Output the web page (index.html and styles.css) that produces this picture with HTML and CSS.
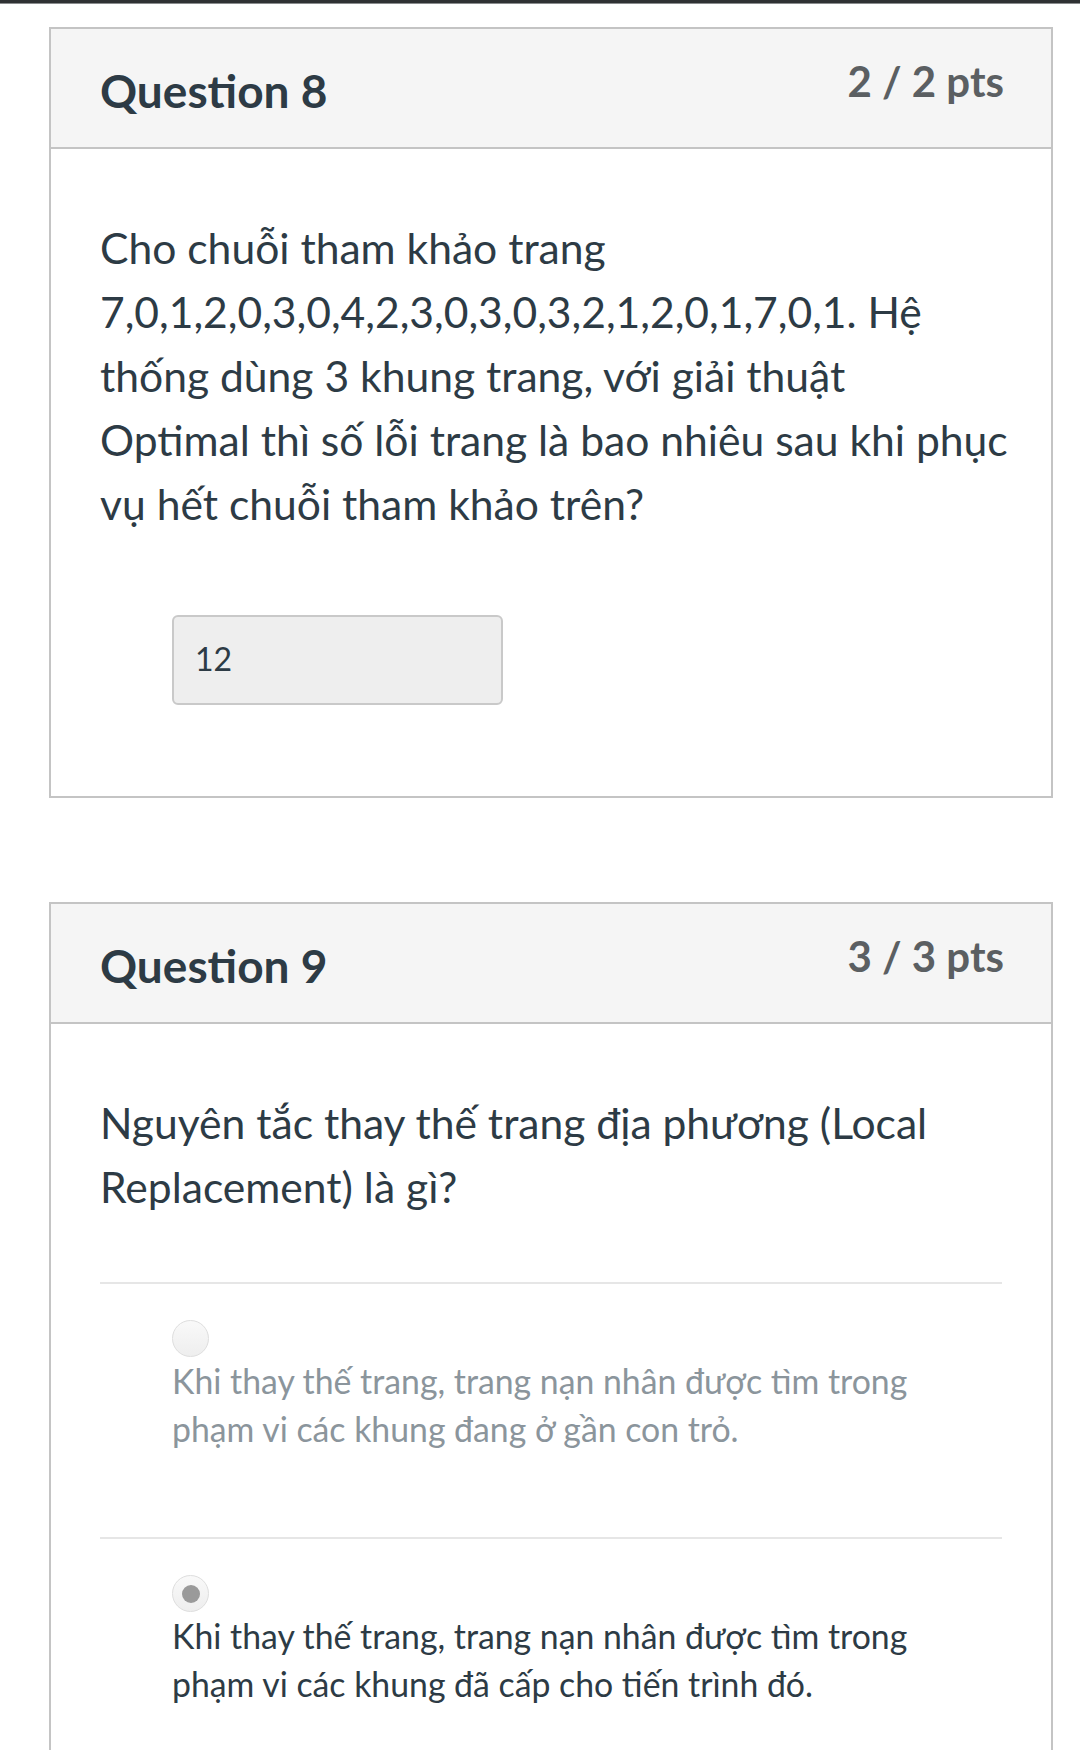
FILE: index.html
```html
<!DOCTYPE html>
<html lang="vi">
<head>
<meta charset="utf-8">
<link rel="stylesheet" href="styles.css">
</head>
<body>
<div class="topbar"></div>
<main class="page">
  <section class="card">
    <header class="card-header">
      <h2 class="q-title">Question 8</h2>
      <div class="q-points">2 / 2 pts</div>
    </header>
    <div class="card-body">
      <p class="q-text">Cho chuỗi tham khảo trang 7,0,1,2,0,3,0,4,2,3,0,3,0,3,2,1,2,0,1,7,0,1. Hệ thống dùng 3 khung trang, với giải thuật<br>Optimal thì số lỗi trang là bao nhiêu sau khi phục vụ hết chuỗi tham khảo trên?</p>
      <div class="answer-box">12</div>
    </div>
  </section>

  <section class="card card-open">
    <header class="card-header">
      <h2 class="q-title">Question 9</h2>
      <div class="q-points">3 / 3 pts</div>
    </header>
    <div class="card-body">
      <p class="q-text">Nguyên tắc thay thế trang địa phương (Local Replacement) là gì?</p>
      <div class="options">
        <div class="option">
          <span class="radio"></span>
          <div class="opt-text opt-muted">Khi thay thế trang, trang nạn nhân được tìm trong phạm vi các khung đang ở gần con trỏ.</div>
        </div>
        <div class="option">
          <span class="radio radio-checked"></span>
          <div class="opt-text">Khi thay thế trang, trang nạn nhân được tìm trong phạm vi các khung đã cấp cho tiến trình đó.</div>
        </div>
      </div>
    </div>
  </section>
</main>
</body>
</html>
```

FILE: styles.css
```css
* { box-sizing: border-box; }

html, body {
  margin: 0;
  padding: 0;
  background: #ffffff;
}

body {
  font-family: Lato, "Noto Sans", sans-serif;
  color: #2d3b45;
  height: 1750px;
  overflow: hidden;
}

.topbar {
  height: 4px;
  background: #2f3133;
  border-bottom: 1px solid #8a8c8e;
}

.page {
  padding: 23px 27px 0 49px;
}

.card {
  border: 2px solid #c4c4c4;
  background: #ffffff;
  margin-bottom: 104px;
}

.card-open {
  border-bottom: none;
}

.card-header {
  height: 120px;
  background: #f5f5f5;
  border-bottom: 2px solid #c4c4c4;
  padding: 0 47px 0 49px;
  display: flex;
  justify-content: space-between;
  align-items: flex-start;
}

.q-title {
  margin: 34px 0 0 0;
  font-size: 46px;
  line-height: 1.2;
  font-weight: 700;
  color: #2d3b45;
}

.q-points {
  margin-top: 27px;
  font-size: 42px;
  line-height: 1.2;
  font-weight: 700;
  color: #5b5f62;
}

.card-body {
  padding: 67px 30px 91px 49px;
}

.q-text {
  margin: 0;
  font-size: 42.6px;
  line-height: 64px;
}

.answer-box {
  margin: 79px 0 0 72px;
  width: 331px;
  height: 90px;
  background: #eeeeee;
  border: 2px solid #c9c9c9;
  border-radius: 6px;
  padding: 0 21px 4px 21px;
  display: flex;
  align-items: center;
  font-size: 32px;
  color: #2d3b45;
}

.options {
  margin-top: 63px;
  margin-right: 19px;
}

.option {
  border-top: 2px solid #e6e6e6;
  padding: 36px 40px 84px 72px;
}

.radio {
  display: flex;
  align-items: center;
  justify-content: center;
  width: 37px;
  height: 37px;
  border-radius: 50%;
  border: 1px solid #dedede;
  background: linear-gradient(#f9f9f9, #eeeeee);
}

.radio-checked::after {
  content: "";
  width: 18px;
  height: 18px;
  border-radius: 50%;
  background: #9a9a9a;
}

.opt-text {
  font-size: 33.8px;
  line-height: 48px;
  color: #2d3b45;
}

.opt-muted {
  color: #8b959c;
}
```
